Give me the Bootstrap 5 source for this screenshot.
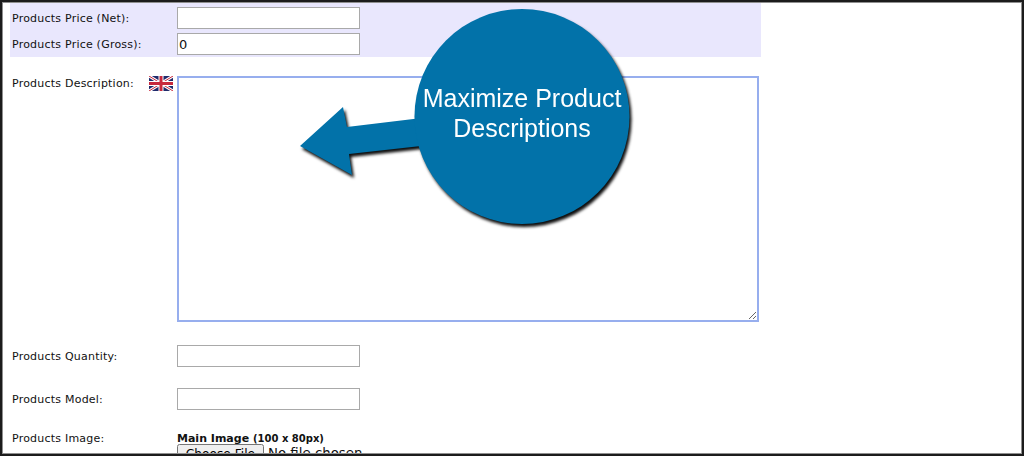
<!DOCTYPE html>
<html lang="en">
<head>
<meta charset="utf-8">
<title>Products</title>
<link href="https://cdn.jsdelivr.net/npm/bootstrap@5.3.0/dist/css/bootstrap.min.css" rel="stylesheet">
<style>
html,body{margin:0;height:456px;overflow:hidden;background:#fff}
.shot-frame{width:1024px;height:456px;overflow:hidden;position:relative;border:2px solid #1c1c1c;background:#fff;font:11px/14px "DejaVu Sans",Verdana,sans-serif;color:#111}
.shot-frame::after{content:"";position:absolute;inset:0;box-shadow:inset 0 0 0 1px #8f8f8f;pointer-events:none}
.form-area{width:751px;margin-left:8px}
.tinted{background:#e9e7fd;height:55px;row-gap:4px}
.top-strip{width:121px;height:1px;margin-left:167px;background:#555}
.field-row{display:flex;align-items:flex-start;padding-left:2px}
.field-label{width:165px;flex:none;display:flex;justify-content:space-between;padding-top:5px;letter-spacing:.22px}
.plain-input{width:183px;height:22px;border:1px solid #a9a9a9;padding:1px;font:13px "DejaVu Sans",sans-serif;background:#fff;color:#111;border-radius:0;outline:0}
.desc-row{margin-top:19px}
.desc-row .field-label{padding-top:0}
.desc-text{padding-top:1px}
.flag{width:24px;height:15px;margin-right:4px}
.desc-box{width:582px;height:246px;border:2px solid #97aeee;border-radius:0;outline:0;resize:both;background:#fff;padding:2px}
.qty-row{margin-top:23px}
.model-row{margin-top:21px}
.image-row{margin-top:21px}
.image-row .field-label{padding-top:1px}
.main-img{font-weight:700;line-height:13px;padding-top:1px}
.main-img span{font-size:10px}
.file-pick{display:block;font:13.33px "DejaVu Sans",sans-serif;margin-top:-1px}
.file-pick::file-selector-button{width:87px;padding:1px 0;font-size:12.2px;letter-spacing:0}
.callout{position:absolute;left:294px;top:3px;pointer-events:none}
.callout text{font:25px "Liberation Sans",Arial,sans-serif;fill:#fff}
.callout-drop{filter:drop-shadow(2px 3px 1.5px rgba(0,0,0,.95))}
</style>
</head>
<body>
<div class="shot-frame">
  <div class="form-area">
    <div class="tinted d-flex flex-column">
      <div class="top-strip"></div>
      <div class="field-row"><label class="field-label">Products Price (Net):</label><input class="plain-input" type="text"></div>
      <div class="field-row"><label class="field-label">Products Price (Gross):</label><input class="plain-input" type="text" value="0"></div>
    </div>
    <div class="field-row desc-row">
      <label class="field-label"><span class="desc-text">Products Description:</span>
        <svg class="flag" viewBox="0 0 24 15" aria-hidden="true">
          <rect width="24" height="15" fill="#1f2a6b"/>
          <path d="M0 0 24 15M24 0 0 15" stroke="#fff" stroke-width="3"/>
          <path d="M0 0 24 15M24 0 0 15" stroke="#c8283c" stroke-width="1"/>
          <path d="M12 0V15M0 7.5H24" stroke="#fff" stroke-width="5"/>
          <path d="M12 0V15M0 7.5H24" stroke="#c8283c" stroke-width="3"/>
        </svg>
      </label>
      <textarea class="desc-box"></textarea>
    </div>
    <div class="field-row qty-row"><label class="field-label">Products Quantity:</label><input class="plain-input" type="text"></div>
    <div class="field-row model-row"><label class="field-label">Products Model:</label><input class="plain-input" type="text"></div>
    <div class="field-row image-row">
      <label class="field-label">Products Image:</label>
      <div>
        <div class="main-img">Main Image <span>(100 x 80px)</span></div>
        <input class="file-pick" type="file">
      </div>
    </div>
  </div>
  <svg class="callout callout-drop" width="340" height="232" viewBox="296 5 340 232">
    <path d="M300 146 343 107 347 127 430 117 430 145 349 154 352 175Z" fill="#0272a9"/>
    <circle cx="522" cy="116.5" r="107.5" fill="#0272a9"/>
    <text x="522" y="107" text-anchor="middle">Maximize Product</text>
    <text x="522" y="137" text-anchor="middle">Descriptions</text>
  </svg>
</div>
</body>
</html>
